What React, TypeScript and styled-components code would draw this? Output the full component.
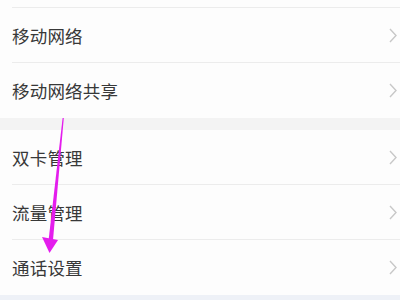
import React from 'react';
import styled, { createGlobalStyle } from 'styled-components';

const GlobalStyle = createGlobalStyle`
  html, body {
    margin: 0;
    padding: 0;
    background: #f3f3f3;
  }
  body {
    font-family: "Noto Sans CJK SC", "Noto Sans", sans-serif;
  }
`;

interface Item {
  label: string;
}

const groups: Item[][] = [
  [{ label: '移动网络' }, { label: '移动网络共享' }],
  [{ label: '双卡管理' }, { label: '流量管理' }, { label: '通话设置' }],
];

const Chevron = () => (
  <svg width="8" height="15" viewBox="0 0 8 15">
    <path d="M1 1 L7 7.5 L1 14" fill="none" stroke="#c8c8c8" strokeWidth="1.4" />
  </svg>
);

const PointerArrow = () => (
  <ArrowLayer width="400" height="300" viewBox="0 0 400 300">
    <polygon points="62.6,118 63.8,118 53,240 48.6,240" fill="#e41ded" />
    <polygon points="42,237 58,240 49.5,253" fill="#e41ded" />
  </ArrowLayer>
);

export default function App() {
  return (
    <>
      <GlobalStyle />
      <Screen>
        <CutRow />
        {groups.map((items, gi) => (
          <Group key={gi} $gapBefore={gi > 0}>
            {items.map((item, i) => (
              <Row key={item.label} $last={i === items.length - 1}>
                <Label>{item.label}</Label>
                <Chevron />
              </Row>
            ))}
          </Group>
        ))}
        <Footer />
        <PointerArrow />
      </Screen>
    </>
  );
}

const Screen = styled.div`
  position: relative;
  display: flex;
  flex-direction: column;
  width: 400px;
  height: 300px;
  overflow: hidden;
  background: #f3f3f3;
`;

const CutRow = styled.div`
  height: 7px;
  background: #fdfdfd;
  border-bottom: 1px solid #ececec;
  margin-left: 12px;
  box-shadow: -12px 0 0 #fdfdfd;
`;

const Group = styled.div<{ $gapBefore: boolean }>`
  display: flex;
  flex-direction: column;
  background: #fdfdfd;
  margin-top: ${(p) => (p.$gapBefore ? '12px' : '0')};
`;

const Row = styled.div<{ $last: boolean }>`
  display: flex;
  align-items: center;
  justify-content: space-between;
  height: 55px;
  box-sizing: border-box;
  margin-left: 12px;
  padding-right: 3px;
  border-bottom: ${(p) => (p.$last ? 'none' : '1px solid #ececec')};
`;

const Label = styled.span`
  font-size: 17.5px;
  color: #383838;
  letter-spacing: 0.2px;
`;

const Footer = styled.div`
  flex: 1;
  background: #eef1f7;
`;

const ArrowLayer = styled.svg`
  position: absolute;
  top: 0;
  left: 0;
  pointer-events: none;
`;
